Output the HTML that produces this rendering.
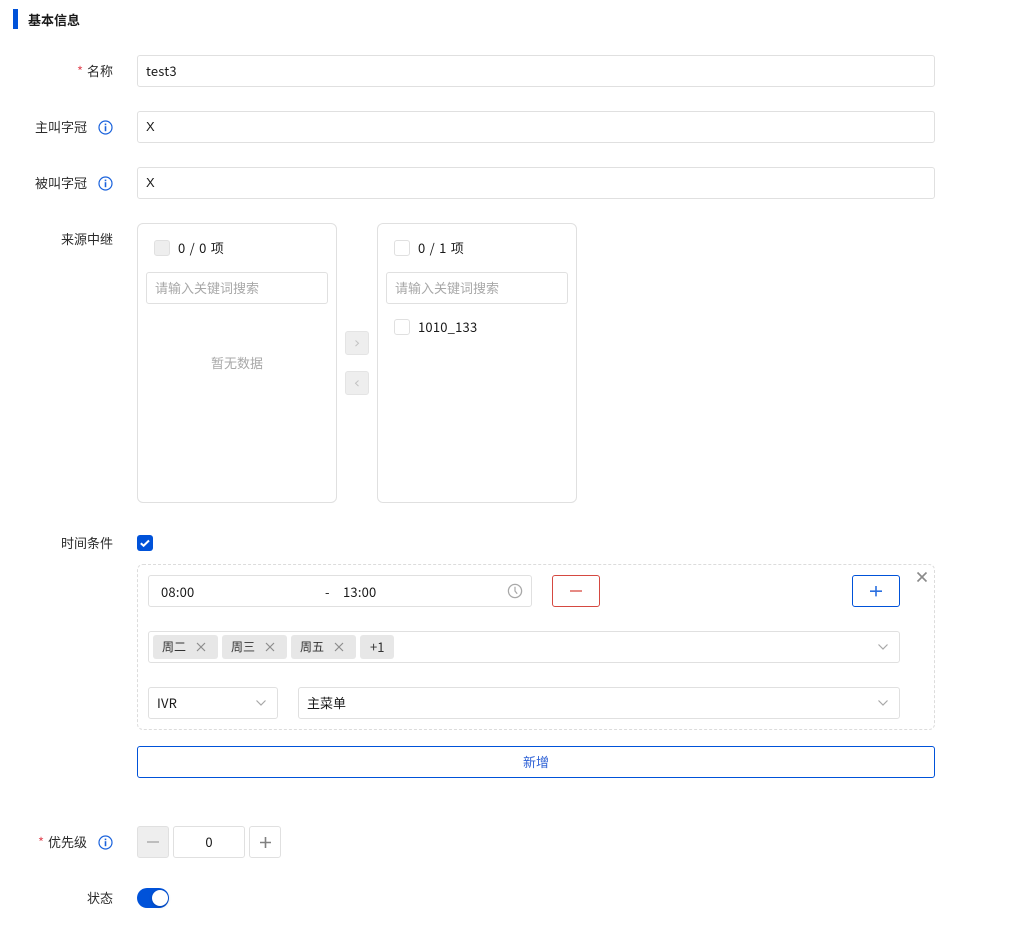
<!DOCTYPE html>
<html lang="zh-CN">
<head>
<meta charset="utf-8">
<style>
html,body{margin:0;padding:0;background:#fff;}
body{width:1035px;height:942px;position:relative;overflow:hidden;font-family:"Noto Sans CJK SC","Liberation Sans",sans-serif;font-size:13px;color:#1a1a1a;line-height:20px;}
.a{position:absolute;box-sizing:border-box;}
.t{position:absolute;white-space:nowrap;line-height:20px;}
.n{letter-spacing:.2px;}
.c{letter-spacing:.15px;word-spacing:1.2px;}
.x{font-family:"Liberation Sans",sans-serif;font-size:13px;}
.l{position:absolute;white-space:nowrap;line-height:20px;text-align:right;color:#2b2b2b;}
.box{position:absolute;box-sizing:border-box;border:1px solid #e0e0e0;border-radius:3px;background:#fff;}
.cb{position:absolute;box-sizing:border-box;width:16px;height:16px;border:1px solid #e0e0e0;border-radius:3px;background:#fff;}
.ph{color:#a8a8a8;}
.tag{position:absolute;box-sizing:border-box;height:24px;background:#e7e7e7;border-radius:3px;top:635px;color:#333;line-height:24px;font-size:12px;}
svg{position:absolute;display:block;overflow:visible;}
</style>
</head>
<body>
<div class="a" style="left:13px;top:9px;width:5px;height:20px;background:#0052d9;"></div>
<div class="t" style="left:28px;top:10px;font-weight:700;color:#1a1a1a;">基本信息</div>

<div class="t" style="left:77px;top:61px;color:#e34d59;">*</div>
<div class="l" style="left:87px;top:61px;">名称</div>
<div class="box" style="left:137px;top:55px;width:798px;height:32px;"></div>
<div class="t n" style="left:146px;top:61px;">test3</div>

<div class="l" style="left:35px;top:117px;">主叫字冠</div>
<svg style="left:98px;top:120px" width="15" height="15" viewBox="0 0 15 15"><circle cx="7.5" cy="7.5" r="6.5" fill="none" stroke="#1a62dc" stroke-width="1.2"/><rect x="6.7" y="6.2" width="1.6" height="5" fill="#1a62dc"/><rect x="6.7" y="3.6" width="1.6" height="1.6" fill="#1a62dc"/></svg>
<div class="box" style="left:137px;top:111px;width:798px;height:32px;"></div>
<div class="t x" style="left:146px;top:117px;">X</div>

<div class="l" style="left:35px;top:173px;">被叫字冠</div>
<svg style="left:98px;top:176px" width="15" height="15" viewBox="0 0 15 15"><circle cx="7.5" cy="7.5" r="6.5" fill="none" stroke="#1a62dc" stroke-width="1.2"/><rect x="6.7" y="6.2" width="1.6" height="5" fill="#1a62dc"/><rect x="6.7" y="3.6" width="1.6" height="1.6" fill="#1a62dc"/></svg>
<div class="box" style="left:137px;top:167px;width:798px;height:32px;"></div>
<div class="t x" style="left:146px;top:173px;">X</div>

<div class="l" style="left:61px;top:229px;">来源中继</div>
<div class="box" style="left:137px;top:223px;width:200px;height:280px;border-radius:6px;"></div>
<div class="cb" style="left:154px;top:240px;background:#eee;"></div>
<div class="t c" style="left:178px;top:238px;">0 / 0 项</div>
<div class="box" style="left:146px;top:272px;width:182px;height:32px;"></div>
<div class="t ph" style="left:155px;top:278px;">请输入关键词搜索</div>
<div class="t ph" style="left:211px;top:353px;">暂无数据</div>

<div class="a" style="left:345px;top:331px;width:24px;height:24px;background:#eee;border:1px solid #e4e4e4;border-radius:3px;"></div>
<svg style="left:345px;top:331px" width="24" height="24"><path d="M10.500 9.500l3 2.800-3 2.800" fill="none" stroke="#c2c2c2" stroke-width="1"/></svg>
<div class="a" style="left:345px;top:371px;width:24px;height:24px;background:#eee;border:1px solid #e4e4e4;border-radius:3px;"></div>
<svg style="left:345px;top:371px" width="24" height="24"><path d="M13.500 9.500l-3 2.800 3 2.800" fill="none" stroke="#c2c2c2" stroke-width="1"/></svg>

<div class="box" style="left:377px;top:223px;width:200px;height:280px;border-radius:6px;"></div>
<div class="cb" style="left:394px;top:240px;"></div>
<div class="t c" style="left:418px;top:238px;">0 / 1 项</div>
<div class="box" style="left:386px;top:272px;width:182px;height:32px;"></div>
<div class="t ph" style="left:395px;top:278px;">请输入关键词搜索</div>
<div class="cb" style="left:394px;top:319px;"></div>
<div class="t n" style="left:418px;top:317px;">1010_133</div>

<div class="l" style="left:61px;top:533px;">时间条件</div>
<div class="a" style="left:137px;top:535px;width:16px;height:16px;background:#0052d9;border-radius:3px;"></div>
<svg style="left:137px;top:535px" width="16" height="16"><path d="M3.800 8.200l2.800 2.500 5.400-5.200" fill="none" stroke="#fff" stroke-width="2"/></svg>

<div class="a" style="left:137px;top:564px;width:798px;height:166px;border:1px dashed #dcdcdc;border-radius:6px;"></div>
<svg style="left:917px;top:572px" width="10" height="10"><path d="M.500 .500l9 9M9.500 .500l-9 9" fill="none" stroke="#8a8a8a" stroke-width="1.600"/></svg>

<div class="box" style="left:148px;top:575px;width:384px;height:32px;"></div>
<div class="t n" style="left:161px;top:582px;">08:00</div>
<div class="t" style="left:325px;top:582px;">-</div>
<div class="t n" style="left:343px;top:582px;">13:00</div>
<svg style="left:507px;top:583px" width="16" height="16"><circle cx="8" cy="8" r="6.600" fill="none" stroke="#a8a8a8" stroke-width="1.300"/><path d="M8 3.800V8l2.200 2.800" fill="none" stroke="#a8a8a8" stroke-width="1.200"/></svg>

<div class="a" style="left:552px;top:575px;width:48px;height:32px;border:1px solid #d54941;border-radius:3px;"></div>
<div class="a" style="left:570px;top:590px;width:12px;height:2px;background:#e68a84;"></div>
<div class="a" style="left:852px;top:575px;width:48px;height:32px;border:1px solid #0052d9;border-radius:3px;"></div>
<svg style="left:870px;top:586px" width="12" height="10"><path d="M6 0v10.400M0 5.200h12" stroke="#2a6fe0" stroke-width="1.600" fill="none"/></svg>

<div class="box" style="left:148px;top:631px;width:752px;height:32px;"></div>
<div class="tag" style="left:153px;width:65px;"><span style="position:absolute;left:9px;">周二</span></div>
<div class="tag" style="left:222px;width:65px;"><span style="position:absolute;left:9px;">周三</span></div>
<div class="tag" style="left:291px;width:65px;"><span style="position:absolute;left:9px;">周五</span></div>
<div class="tag" style="left:360px;width:34px;"><span style="position:absolute;left:10px;font-size:13px;">+1</span></div>
<svg style="left:197px;top:643px" width="8" height="8"><path d="M0 0l8 8M8 0L0 8" stroke="#8c8c8c" stroke-width="1.200" fill="none"/></svg>
<svg style="left:266px;top:643px" width="8" height="8"><path d="M0 0l8 8M8 0L0 8" stroke="#8c8c8c" stroke-width="1.200" fill="none"/></svg>
<svg style="left:335px;top:643px" width="8" height="8"><path d="M0 0l8 8M8 0L0 8" stroke="#8c8c8c" stroke-width="1.200" fill="none"/></svg>
<svg style="left:878px;top:644px" width="10" height="6"><path d="M.500 .500L5 5 9.500 .500" stroke="#a8a8a8" stroke-width="1.200" fill="none"/></svg>

<div class="box" style="left:148px;top:687px;width:130px;height:32px;"></div>
<div class="t n" style="left:157px;top:693px;">IVR</div>
<svg style="left:256px;top:700px" width="10" height="6"><path d="M.500 .500L5 5 9.500 .500" stroke="#a8a8a8" stroke-width="1.200" fill="none"/></svg>
<div class="box" style="left:298px;top:687px;width:602px;height:32px;"></div>
<div class="t" style="left:307px;top:693px;">主菜单</div>
<svg style="left:878px;top:700px" width="10" height="6"><path d="M.500 .500L5 5 9.500 .500" stroke="#a8a8a8" stroke-width="1.200" fill="none"/></svg>

<div class="a" style="left:137px;top:746px;width:798px;height:32px;border:1px solid #0052d9;border-radius:3px;"></div>
<div class="t" style="left:523px;top:752px;color:#2f62d6;">新增</div>

<div class="t" style="left:38px;top:832px;color:#e34d59;">*</div>
<div class="l" style="left:48px;top:832px;">优先级</div>
<svg style="left:98px;top:835px" width="15" height="15" viewBox="0 0 15 15"><circle cx="7.500" cy="7.500" r="6.500" fill="none" stroke="#1a62dc" stroke-width="1.200"/><rect x="6.700" y="6.200" width="1.600" height="5" fill="#1a62dc"/><rect x="6.700" y="3.600" width="1.600" height="1.600" fill="#1a62dc"/></svg>
<div class="box" style="left:137px;top:826px;width:32px;height:32px;background:#eee;"></div>
<div class="a" style="left:147px;top:841px;width:12px;height:2px;background:#bdbdbd;"></div>
<div class="box" style="left:173px;top:826px;width:72px;height:32px;"></div>
<div class="t" style="left:173px;width:72px;top:832px;text-align:center;">0</div>
<div class="box" style="left:249px;top:826px;width:32px;height:32px;"></div>
<svg style="left:260px;top:837px" width="11" height="11"><path d="M5.500 0v11M0 5.500h11" stroke="#808080" stroke-width="1.600" fill="none"/></svg>

<div class="l" style="left:87px;top:888px;">状态</div>
<div class="a" style="left:137px;top:888px;width:32px;height:20px;background:#0052d9;border-radius:10px;"></div>
<div class="a" style="left:152px;top:890px;width:16px;height:16px;background:#fff;border-radius:50%;box-shadow:0 1px 3px rgba(0,0,0,.2);"></div>
</body>
</html>
